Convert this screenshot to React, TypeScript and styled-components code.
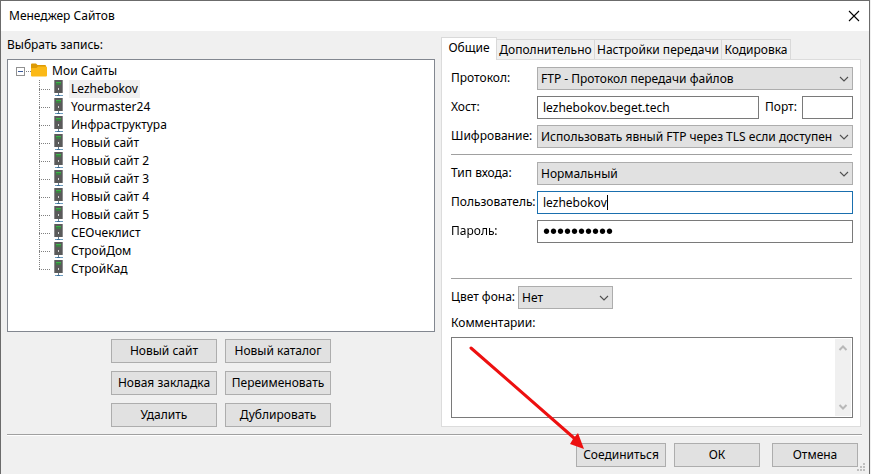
import React, { useEffect, useRef, useState } from "react";
import styled, { createGlobalStyle, css } from "styled-components";

const font = `"Noto Sans", "Open Sans", sans-serif`;

const GlobalStyle = createGlobalStyle`
  *, *::before, *::after { box-sizing: border-box; }
  body { margin: 0; background: #f0f0f0; font: 12px/16px ${font}; color: #000; }
  button, input, select, textarea { font: inherit; color: inherit; border-radius: 0; margin: 0; outline: none; }
`;

const Dialog = styled.main`
  min-height: 100vh;
  margin-right: 1px;
  display: flex;
  flex-direction: column;
  background: #f0f0f0;
  border: solid #6b6b6b;
  border-width: 1px 1px 0;
`;

const TitleBar = styled.header`
  height: 30px;
  padding: 0 9px 0 8px;
  display: flex;
  align-items: center;
  justify-content: space-between;
  background: #fff;
`;

const Title = styled.h1`
  margin: 0;
  font: inherit;
`;

const CloseButton = styled.button`
  display: flex;
  padding: 0;
  border: 0;
  background: none;
`;

const Columns = styled.div`
  flex: 1;
  display: grid;
  grid-template-columns: 428fr 420fr;
  gap: 6px;
  padding: 6px 8px 7px 6px;
`;

const LeftColumn = styled.section`
  display: flex;
  flex-direction: column;
`;

const ListLabel = styled.h2`
  margin: 0;
  height: 22px;
  font: inherit;
`;

const Tree = styled.div`
  flex: 1;
  padding: 2px 8px;
  background: #fff;
  border: 1px solid #828790;
`;

const TreeRoot = styled.div`
  display: flex;
  align-items: center;
  height: 18px;
`;

const TreeList = styled.ul`
  margin: 0 0 0 23px;
  padding: 0;
  list-style: none;
`;

const TreeItem = styled.li`
  display: flex;
  align-items: center;
  height: 18px;
`;

const TreeText = styled.span<{ $selected?: boolean }>`
  padding: 0 2px;
  line-height: 18px;
  background: ${(p) => (p.$selected ? "#f0f0f0" : "transparent")};
`;

const SiteActions = styled.div`
  display: grid;
  grid-template-columns: 106px 106px;
  justify-content: center;
  gap: 8px;
  padding-top: 7px;
`;

const PushButton = styled.button`
  height: 24px;
  padding: 0;
  line-height: 16px;
  white-space: nowrap;
  background: #e1e1e1;
  border: 1px solid #adadad;
`;

const RightColumn = styled.section`
  display: flex;
  flex-direction: column;
`;

const Tabs = styled.div`
  display: flex;
  align-items: flex-end;
  height: 22px;
`;

const Tab = styled.button<{ $width: number; $active?: boolean }>`
  width: ${(p) => p.$width}px;
  height: 20px;
  padding: 0;
  white-space: nowrap;
  background: #f0f0f0;
  border: 1px solid #d9d9d9;
  border-width: 1px 1px 0 0;
  ${(p) =>
    p.$active &&
    css`
      height: 23px;
      margin-bottom: -1px;
      padding-bottom: 2px;
      background: #fff;
      border-left-width: 1px;
      position: relative;
    `}
`;

const Page = styled.div`
  flex: 1;
  display: flex;
  flex-direction: column;
  padding: 7px 7px 8px 9px;
  background: #fff;
  border: 1px solid #dcdcdc;
`;

const Fields = styled.div`
  display: grid;
  grid-template-columns: 86px minmax(0, 1fr);
  row-gap: 6px;
`;

const Label = styled.label`
  line-height: 22px;
  white-space: nowrap;
`;

const field = css`
  width: 100%;
  min-width: 0;
  height: 23px;
`;

const SelectBox = styled.div`
  ${field}
  display: grid;
  align-items: center;

  > * { grid-area: 1 / 1; }
  > svg { justify-self: end; margin-right: 3px; pointer-events: none; }
`;

const Select = styled.select`
  ${field}
  appearance: none;
  padding: 0 16px 0 3px;
  background: #e1e1e1;
  border: 1px solid #adadad;
`;

const Input = styled.input`
  ${field}
  padding: 0 5px;
  background: #fff;
  border: 1px solid #7a7a7a;
  &:focus { border-color: #1a6fae; }
`;

const PasswordInput = styled(Input)`
  font: 20px/20px "Liberation Sans", sans-serif;
`;

const CaretField = styled.div`
  display: grid;
  align-items: center;

  > * { grid-area: 1 / 1; }
  > input { caret-color: transparent; }
`;

const Caret = styled.span`
  justify-self: start;
  margin-left: 6px;
  height: 15px;
  line-height: 15px;
  color: transparent;
  white-space: pre;
  border-right: 1px solid #000;
  pointer-events: none;
  user-select: none;
`;

const HostLine = styled.div`
  display: grid;
  grid-template-columns: minmax(0, 1fr) 31px 51px;
  column-gap: 6px;
`;

const Separator = styled.hr<{ $before: number }>`
  width: calc(100% - 1px);
  height: 1px;
  margin: ${(p) => p.$before}px 0 7px;
  border: 0;
  background: #a0a0a0;
`;

const ColorLine = styled.div`
  display: grid;
  grid-template-columns: 67px 95px;
`;

const CommentLabel = styled.label`
  padding: 6px 0;
`;

const CommentBox = styled.div`
  flex: 1;
  display: flex;
  min-height: 81px;
  padding: 1px;
  background: #fff;
  border: 1px solid #7a7a7a;
`;

const Comment = styled.textarea`
  flex: 1;
  min-width: 0;
  padding: 2px 4px;
  border: 0;
  resize: none;
  background: transparent;
  overflow: hidden;
`;

const ScrollTrack = styled.div`
  display: flex;
  flex-direction: column;
  justify-content: space-between;
  align-items: center;
  width: 16px;
  padding: 5px 0;
  background: #f0f0f0;
`;

const Footer = styled.footer`
  display: flex;
  justify-content: flex-end;
  margin: 0 7px 0 6px;
  padding: 8px 4px 7px 0;
  border-top: 1px solid #a0a0a0;
  box-shadow: inset 0 1px #fff;
`;

const FooterButtons = styled.div`
  display: grid;
  grid-template-columns: 90px 86px 90px;
  column-gap: 8px;

  > :last-child { margin-left: 4px; }
`;

const Grip = styled.svg`
  position: absolute;
  right: 5px;
  bottom: 2px;
`;

const Pointer = styled.svg`
  position: absolute;
  right: 0;
  bottom: 0;
  pointer-events: none;
`;

const Canvas = styled.div`
  position: relative;
`;

const Chevron = () => (
  <svg width="12" height="8" viewBox="0 0 12 8" fill="none">
    <path d="M2 2l4 4 4-4" stroke="#505050" strokeWidth="1.1" />
  </svg>
);

const ScrollArrow = ({ up }: { up?: boolean }) => (
  <svg width="10" height="8" viewBox="0 0 10 8" fill="none">
    <path d={up ? "M1.5 6L5 2.5 8.5 6" : "M1.5 2L5 5.5 8.5 2"} stroke="#b8b8b8" strokeWidth="2" />
  </svg>
);

const Expander = () => (
  <svg width="15" height="18" viewBox="0 0 15 18" shapeRendering="crispEdges">
    <rect x="0.5" y="5.5" width="8" height="8" fill="#fff" stroke="#919191" />
    <path d="M2 9.5h5" stroke="#3b5a9a" />
    <path d="M10 9.5h5" stroke="#808080" strokeDasharray="1 1" />
  </svg>
);

const Folder = () => (
  <svg width="16" height="18" viewBox="0 0 16 18">
    <path d="M0 2.5Q0 1.5 1 1.5H5L6.5 3H14q1 0 1 1V13H0z" fill="#dd9a05" />
    <path d="M0 7q0-1 1-1H5.5L7 4.5H15q1 0 1 1V13.5q0 1-1 1H1q-1 0-1-1z" fill="#fbb917" />
  </svg>
);

const Branch = ({ last }: { last?: boolean }) => (
  <svg width="12" height="18" viewBox="0 0 12 18" shapeRendering="crispEdges">
    <path d={last ? "M.5 0v10" : "M.5 0v18"} stroke="#808080" strokeDasharray="1 1" />
    <path d="M0 9.5h12" stroke="#808080" strokeDasharray="1 1" />
  </svg>
);

const Server = () => (
  <svg width="18" height="18" viewBox="0 0 18 18">
    <path d="M3 0h9v13H3z" fill="#8a8a8c" />
    <path d="M4 0h7v13H4z" fill="#5a5a5a" />
    <path d="M5 2h5v1H5z" fill="#3cb548" />
    <path d="M5 3h5v2H5z" fill="#3f7f45" />
    <path d="M7 8h1v2H7z" fill="#d8d8d8" />
    <path d="M7 13h1v2H7z" fill="#6c7f8e" />
    <path d="M4 15h8v1H4z" fill="#6c9cc0" />
    <path d="M6 15h3v1H6z" fill="#3d6f97" />
  </svg>
);

const sites = [
  "Lezhebokov", "Yourmaster24", "Инфраструктура", "Новый сайт", "Новый сайт 2", "Новый сайт 3",
  "Новый сайт 4", "Новый сайт 5", "СЕОчеклист", "СтройДом", "СтройКад",
];

const siteActions = ["Новый сайт", "Новый каталог", "Новая закладка", "Переименовать", "Удалить", "Дублировать"];

const tabs = [
  { name: "Общие", width: 56 },
  { name: "Дополнительно", width: 98 },
  { name: "Настройки передачи", width: 127 },
  { name: "Кодировка", width: 69 },
];

function Choice({ id, value }: { id: string; value: string }) {
  return (
    <SelectBox>
      <Select id={id}>
        <option>{value}</option>
      </Select>
      <Chevron />
    </SelectBox>
  );
}

export default function App() {
  const userInput = useRef<HTMLInputElement>(null);
  const [user, setUser] = useState("lezhebokov");

  useEffect(() => {
    userInput.current?.focus();
  }, []);

  return (
    <Canvas>
      <GlobalStyle />
      <Dialog>
        <TitleBar>
          <Title>Менеджер Сайтов</Title>
          <CloseButton aria-label="Закрыть">
            <svg width="12" height="12" viewBox="0 0 12 12" fill="none">
              <path d="M1 1l10 10M11 1L1 11" stroke="#000" strokeWidth="1.1" />
            </svg>
          </CloseButton>
        </TitleBar>
        <Columns>
          <LeftColumn>
            <ListLabel>Выбрать запись:</ListLabel>
            <Tree>
              <TreeRoot>
                <Expander />
                <Folder />
                <TreeText>&nbsp;Мои Сайты</TreeText>
              </TreeRoot>
              <TreeList>
                {sites.map((site, i) => (
                  <TreeItem key={site}>
                    <Branch last={i === sites.length - 1} />
                    <Server />
                    <TreeText $selected={i === 0}>{site}</TreeText>
                  </TreeItem>
                ))}
              </TreeList>
            </Tree>
            <SiteActions>
              {siteActions.map((name) => (
                <PushButton key={name}>{name}</PushButton>
              ))}
            </SiteActions>
          </LeftColumn>
          <RightColumn>
            <Tabs role="tablist">
              {tabs.map((tab, i) => (
                <Tab key={tab.name} role="tab" aria-selected={i === 0} $width={tab.width} $active={i === 0}>
                  {tab.name}
                </Tab>
              ))}
            </Tabs>
            <Page>
              <Fields>
                <Label htmlFor="protocol">Протокол:</Label>
                <Choice id="protocol" value="FTP - Протокол передачи файлов" />
                <Label htmlFor="host">Хост:</Label>
                <HostLine>
                  <Input id="host" defaultValue="lezhebokov.beget.tech" />
                  <Label htmlFor="port">Порт:</Label>
                  <Input id="port" />
                </HostLine>
                <Label htmlFor="encryption">Шифрование:</Label>
                <Choice id="encryption" value="Использовать явный FTP через TLS если доступен" />
              </Fields>
              <Separator $before={6} />
              <Fields>
                <Label htmlFor="logon">Тип входа:</Label>
                <Choice id="logon" value="Нормальный" />
                <Label htmlFor="user">Пользователь:</Label>
                <CaretField>
                  <Input id="user" ref={userInput} value={user} onChange={(e) => setUser(e.target.value)} />
                  <Caret aria-hidden="true">{user}</Caret>
                </CaretField>
                <Label htmlFor="password">Пароль:</Label>
                <PasswordInput id="password" type="password" defaultValue="aaaaaaaaaa" />
              </Fields>
              <Separator $before={35} />
              <ColorLine>
                <Label htmlFor="color">Цвет фона:</Label>
                <Choice id="color" value="Нет" />
              </ColorLine>
              <CommentLabel htmlFor="comment">Комментарии:</CommentLabel>
              <CommentBox>
                <Comment id="comment" />
                <ScrollTrack>
                  <ScrollArrow up />
                  <ScrollArrow />
                </ScrollTrack>
              </CommentBox>
            </Page>
          </RightColumn>
        </Columns>
        <Footer>
          <FooterButtons>
            <PushButton>Соединиться</PushButton>
            <PushButton>ОК</PushButton>
            <PushButton>Отмена</PushButton>
          </FooterButtons>
        </Footer>
      </Dialog>
      <Grip width="9" height="9" viewBox="0 0 9 9" fill="#bfbfbf">
        <path d="M6 0h2v2H6zM3 3h2v2H3zM6 3h2v2H6zM0 6h2v2H0zM3 6h2v2H3zM6 6h2v2H6z" />
      </Grip>
      <Pointer width="411" height="134" viewBox="0 0 411 134">
        <path d="M11 8L114 98" stroke="#ed1010" strokeWidth="3" strokeLinecap="round" />
        <path d="M124 109l-14-5 3-5 5-6z" fill="#ed1010" />
      </Pointer>
    </Canvas>
  );
}
